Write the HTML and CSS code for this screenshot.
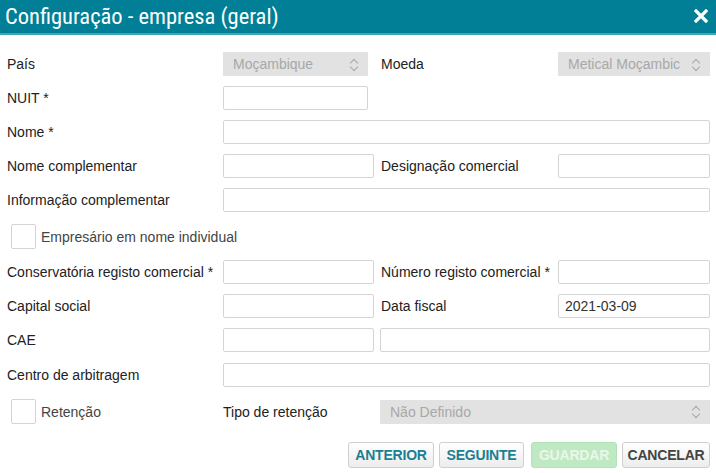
FILE: index.html
```html
<!DOCTYPE html>
<html lang="pt">
<head>
  <meta charset="UTF-8">
  <title>Configuração - empresa (geral)</title>
  <link rel="stylesheet" href="styles.css">
</head>
<body>

<div class="dialog">
  <div class="dialog-header">
    <span class="dialog-title">Configuração - empresa (geral)</span>
    <span class="close">
      <svg width="14" height="14" viewBox="0 0 14 14">
        <path d="M2 2 L12 12 M12 2 L2 12" stroke="#fff" stroke-width="3.2" stroke-linecap="square"/>
      </svg>
    </span>
  </div>

  <form class="dialog-body">
    <div class="row">
      <label class="lbl">País</label>
      <div class="select short"><span>Moçambique</span><i class="arrows"></i></div>
      <label class="lbl2">Moeda</label>
      <div class="select right"><span>Metical Moçambic</span><i class="arrows"></i></div>
    </div>

    <div class="row">
      <label class="lbl">NUIT *</label>
      <input class="field short" type="text">
    </div>

    <div class="row">
      <label class="lbl">Nome *</label>
      <input class="field wide" type="text">
    </div>

    <div class="row">
      <label class="lbl">Nome complementar</label>
      <input class="field mid" type="text">
      <label class="lbl2">Designação comercial</label>
      <input class="field right" type="text">
    </div>

    <div class="row">
      <label class="lbl">Informação complementar</label>
      <input class="field wide" type="text">
    </div>

    <div class="row check-row first-check">
      <span class="checkbox"></span>
      <label class="check-lbl">Empresário em nome individual</label>
    </div>

    <div class="row">
      <label class="lbl">Conservatória registo comercial *</label>
      <input class="field mid" type="text">
      <label class="lbl2">Número registo comercial *</label>
      <input class="field right" type="text">
    </div>

    <div class="row">
      <label class="lbl">Capital social</label>
      <input class="field mid" type="text">
      <label class="lbl2">Data fiscal</label>
      <input class="field right" type="text" value="2021-03-09">
    </div>

    <div class="row">
      <label class="lbl">CAE</label>
      <input class="field mid" type="text">
      <input class="field rest" type="text">
    </div>

    <div class="row arbitragem">
      <label class="lbl">Centro de arbitragem</label>
      <input class="field wide" type="text">
    </div>

    <div class="row check-row last-check">
      <span class="checkbox"></span>
      <label class="check-lbl ret">Retenção</label>
      <label class="lbl-tipo">Tipo de retenção</label>
      <div class="select rest"><span>Não Definido</span><i class="arrows"></i></div>
    </div>

    <div class="buttons">
      <button type="button" class="btn prev">ANTERIOR</button>
      <button type="button" class="btn next">SEGUINTE</button>
      <button type="button" class="btn save" disabled>GUARDAR</button>
      <button type="button" class="btn cancel">CANCELAR</button>
    </div>
  </form>
</div>

</body>
</html>
```

FILE: styles.css
```css
* {
  box-sizing: border-box;
  font-family: "Liberation Sans", Arial, sans-serif;
}

html, body {
  margin: 0;
  padding: 0;
  width: 716px;
  height: 473px;
  background: #fff;
  color: #222;
  overflow: hidden;
}

.dialog-header {
  height: 35px;
  background: #007f97;
  border-bottom: 2px solid #3ea6b7;
  display: flex;
  align-items: center;
  justify-content: space-between;
  padding: 0 8px 0 5px;
}

.dialog-title {
  font-family: "Liberation Sans Narrow", "Roboto Condensed", "DejaVu Sans Condensed", sans-serif;
  font-size: 22.5px;
  color: #fff;
  padding-bottom: 2px;
}

.close {
  display: flex;
  width: 14px;
  height: 14px;
  margin-bottom: 2px;
}

.dialog-body {
  margin: 0;
  padding: 17px 6px 0 7px;
}

.row {
  display: flex;
  align-items: center;
  height: 24px;
  margin-bottom: 10px;
  font-size: 14px;
}

.lbl {
  width: 216px;
  flex-shrink: 0;
}

.lbl2 {
  width: 184px;
  flex-shrink: 0;
  padding-left: 7px;
}

.field {
  height: 24px;
  border: 1px solid #d4d4d4;
  border-radius: 2px;
  padding: 0 6px;
  font-size: 14px;
  color: #333;
  background: #fff;
  outline: none;
}

.short { width: 145px; }
.mid   { width: 151px; }
.wide  { width: 487px; }
.right { width: 152px; }

/* a wide field right after a mid one, ends at the right edge */
.rest {
  width: 330px;
  margin-left: 6px;
}

.select.short + .lbl2 {
  width: 190px;
  padding-left: 13px;
}

.select {
  height: 24px;
  background: #e2e2e2;
  color: #a8a8a8;
  font-size: 14px;
  display: flex;
  align-items: center;
  justify-content: space-between;
  padding: 0 9px 0 10px;
}

.arrows {
  width: 9px;
  height: 13px;
  position: relative;
}

.arrows::before,
.arrows::after {
  content: "";
  position: absolute;
  left: 1px;
  width: 5px;
  height: 5px;
  border-left: 1px solid #a8a8a8;
  border-top: 1px solid #a8a8a8;
}

.arrows::before {
  top: 2px;
  transform: rotate(45deg);
}

.arrows::after {
  top: 6px;
  transform: rotate(-135deg);
}

.check-row {
  height: 25px;
}

.first-check {
  margin-top: 12px;
  margin-bottom: 11px;
}

.arbitragem {
  margin-top: 11px;
}

.last-check {
  margin-top: 12px;
  margin-bottom: 18px;
}

.checkbox {
  width: 25px;
  height: 25px;
  border: 1px solid #d4d4d4;
  border-radius: 2px;
  margin-left: 4px;
  flex-shrink: 0;
}

.check-lbl {
  padding-left: 5px;
  color: #444;
}

.ret {
  width: 187px;
  flex-shrink: 0;
}

.lbl-tipo {
  width: 151px;
  flex-shrink: 0;
}

.buttons {
  display: flex;
  justify-content: flex-end;
}

.btn {
  height: 26px;
  padding: 0;
  font-size: 14px;
  font-weight: bold;
  color: #1a7f93;
  background: linear-gradient(#ffffff, #ececec);
  border: 1px solid #cfcfcf;
  border-radius: 3px;
  letter-spacing: -0.2px;
}

.prev   { width: 86px; }
.next   { width: 85px; margin-left: 5px; }
.save   { width: 86px; margin-left: 7px; }
.cancel { width: 88px; margin-left: 5px; color: #444; }

.btn.save {
  color: #e9f7e9;
  background: #bfe9c2;
  border-color: #b3e2b6;
}
```
